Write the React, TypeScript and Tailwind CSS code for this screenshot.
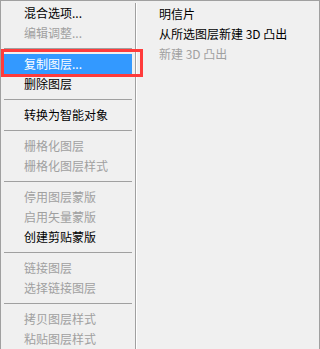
import React from 'react';

type Item = { label: string; disabled?: boolean; active?: boolean } | 'sep';

const leftItems: Item[] = [
  { label: '混合选项...' },
  { label: '编辑调整...', disabled: true },
  'sep',
  { label: '复制图层...', active: true },
  { label: '删除图层' },
  'sep',
  { label: '转换为智能对象' },
  'sep',
  { label: '栅格化图层', disabled: true },
  { label: '栅格化图层样式', disabled: true },
  'sep',
  { label: '停用图层蒙版', disabled: true },
  { label: '启用矢量蒙版', disabled: true },
  { label: '创建剪贴蒙版' },
  'sep',
  { label: '链接图层', disabled: true },
  { label: '选择链接图层', disabled: true },
  'sep',
  { label: '拷贝图层样式', disabled: true },
  { label: '粘贴图层样式', disabled: true },
];

const rightItems = [
  { label: '明信片' },
  { label: '从所选图层新建 3D 凸出' },
  { label: '新建 3D 凸出', disabled: true },
];

const font = { fontFamily: '"Noto Sans CJK SC", "Liberation Sans", sans-serif' };

export default function App() {
  return (
    <div
      className="w-[320px] h-[349px] overflow-hidden bg-[#f0f0f0] border-l border-t border-r border-[#a0a0a0] flex text-[12px] leading-[20px]"
      style={font}
    >
      <div className="w-[134px] shrink-0 pt-[2px] px-[3px]">
        {leftItems.map((item, i) =>
          item === 'sep' ? (
            <div key={i} className="h-[11px] flex items-center">
              <div className="h-px w-full bg-[#a0a0a0]" />
            </div>
          ) : (
            <div
              key={i}
              className={
                'relative h-[20px] pl-[20px] whitespace-nowrap ' +
                (item.active
                  ? 'bg-[#3399ff] text-white'
                  : item.disabled
                  ? 'text-[#a0a0a0]'
                  : 'text-black')
              }
            >
              {item.label}
              {item.active && (
                <div className="absolute left-[-3px] top-[-5px] w-[142px] h-[28px] border-[3px] border-[#ff3b3b]" />
              )}
            </div>
          )
        )}
      </div>
      <div className="w-px mt-[2px] bg-[#a0a0a0] shrink-0" />
      <div className="w-px mt-[2px] bg-white shrink-0" />
      <div className="flex-1 pt-[3px] pl-[22px]">
        {rightItems.map((item, i) => (
          <div
            key={i}
            className={'h-[20px] whitespace-nowrap ' + (item.disabled ? 'text-[#a0a0a0]' : 'text-black')}
          >
            {item.label}
          </div>
        ))}
      </div>
    </div>
  );
}
